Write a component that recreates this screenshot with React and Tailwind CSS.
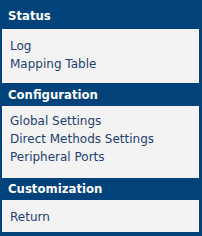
export default function App() {
  const font = { fontFamily: '"DejaVu Sans", Verdana, sans-serif' };
  const Header = ({ children, cls }) => (
    <div className={`flex items-center pl-[6px] text-[13px] font-bold text-white font-['DejaVu_Sans_Condensed','DejaVu_Sans',sans-serif] ${cls}`}>{children}</div>
  );
  const Item = ({ children }) => (
    <div className="h-[18px] leading-[18px] pl-[8px] text-[12px] text-[#24406e]">{children}</div>
  );
  return (
    <div className="w-[202px] h-[236px] bg-[#01427b] pl-[2px] pr-[3px] pb-[4px] flex flex-col" style={font}>
      <Header cls="h-[29px] pt-[3px]">Status</Header>
      <div className="bg-[#f3f3f3] h-[54px] pt-[8px] flex flex-col">
        <Item>Log</Item>
        <Item>Mapping Table</Item>
      </div>
      <Header cls="h-[23px]">Configuration</Header>
      <div className="bg-[#f3f3f3] h-[72px] pt-[6px] flex flex-col">
        <Item>Global Settings</Item>
        <Item>Direct Methods Settings</Item>
        <Item>Peripheral Ports</Item>
      </div>
      <Header cls="h-[22px]">Customization</Header>
      <div className="bg-[#f3f3f3] flex-1 pt-[8px] flex flex-col">
        <Item>Return</Item>
      </div>
    </div>
  );
}
